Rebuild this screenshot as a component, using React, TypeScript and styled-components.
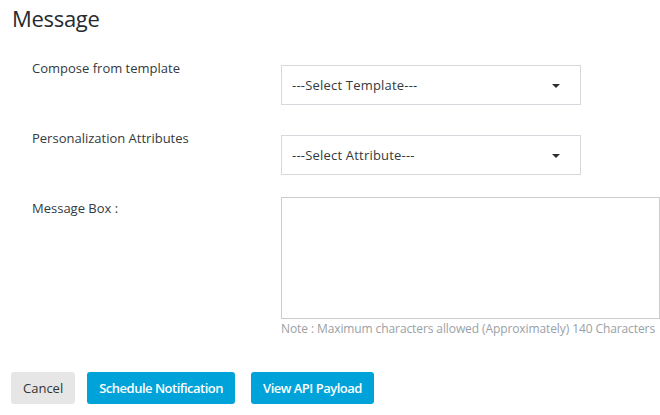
import React from "react";
import styled, {createGlobalStyle} from "styled-components";

const GlobalStyle = createGlobalStyle`
    html, body {
        margin: 0;
        padding: 0;
        background: #ffffff;
    }
    body {
        font-family: "Open Sans", "Noto Sans", sans-serif;
        color: #333333;
        overflow: hidden;
    }
`

const Page = styled.div`
    width: 660px;
    height: 415px;
    padding: 3px 0 0 12px;
    box-sizing: border-box;
`

const Title = styled.h1`
    margin: 0;
    font-size: 22px;
    line-height: 30px;
    font-weight: 400;
    color: #262a2e;
    letter-spacing: -0.3px;
`

const Form = styled.div`
    display: flex;
    flex-direction: column;
    margin-top: 29px;
    padding-left: 20px;
`

const Row = styled.div<{$space?: number}>`
    display: grid;
    grid-template-columns: 249px 1fr;
    margin-top: ${props => props.$space ?? 0}px;
`

const Label = styled.label<{$offset?: number}>`
    font-size: 13px;
    line-height: 18px;
    color: #333a40;
    margin-top: ${props => props.$offset ?? 0}px;
`

const Field = styled.div`
    display: flex;
    flex-direction: column;
`

const Select = styled.div`
    width: 300px;
    height: 40px;
    box-sizing: border-box;
    border: 1px solid #d5d9de;
    display: flex;
    align-items: center;
    padding: 0 20px 0 10px;
    font-size: 13px;
    color: #333a40;
    margin-top: 3px;
`

const SelectText = styled.span`
    flex: 1;
    letter-spacing: 0.2px;
`

const Caret = styled.span`
    width: 0;
    height: 0;
    border-left: 4px solid transparent;
    border-right: 4px solid transparent;
    border-top: 4px solid #2b2f33;
    margin-top: 2px;
`

const TextArea = styled.div`
    width: 379px;
    height: 122px;
    box-sizing: border-box;
    border: 1px solid #cccccc;
`

const Note = styled.div`
    font-size: 12px;
    line-height: 16px;
    color: #9a9fa6;
    margin-top: 2px;
    letter-spacing: -0.1px;
`

const Actions = styled.div`
    display: flex;
    gap: 12px;
    margin-top: 35px;
    margin-left: -1px;
`

const Button = styled.button<{$primary?: boolean, $spaced?: boolean}>`
    height: 32px;
    border: none;
    border-radius: 3px;
    padding: 0 12px;
    font-family: "Open Sans", "Noto Sans", sans-serif;
    font-size: 13px;
    font-weight: ${props => props.$primary ? 600 : 400};
    letter-spacing: ${props => props.$primary ? "-0.5px" : "0"};
    background: ${props => props.$primary ? "#00a3d9" : "#e6e6e6"};
    color: ${props => props.$primary ? "#ffffff" : "#333333"};
    margin-left: ${props => props.$spaced ? "4px" : "0"};
    cursor: pointer;
`

const DropDown = ({placeholder}: {placeholder: string}) => <Select>
    <SelectText>{placeholder}</SelectText>
    <Caret/>
</Select>

export default function App() {
    return <Page>
        <GlobalStyle/>
        <Title>Message</Title>
        <Form>
            <Row>
                <Label $offset={-3}>Compose from template</Label>
                <DropDown placeholder="---Select Template---"/>
            </Row>
            <Row $space={27}>
                <Label $offset={-3}>Personalization Attributes</Label>
                <DropDown placeholder="---Select Attribute---"/>
            </Row>
            <Row $space={22}>
                <Label $offset={2}>Message Box :</Label>
                <Field>
                    <TextArea/>
                    <Note>Note : Maximum characters allowed (Approximately) 140 Characters</Note>
                </Field>
            </Row>
        </Form>
        <Actions>
            <Button>Cancel</Button>
            <Button $primary>Schedule Notification</Button>
            <Button $primary $spaced>View API Payload</Button>
        </Actions>
    </Page>
}
